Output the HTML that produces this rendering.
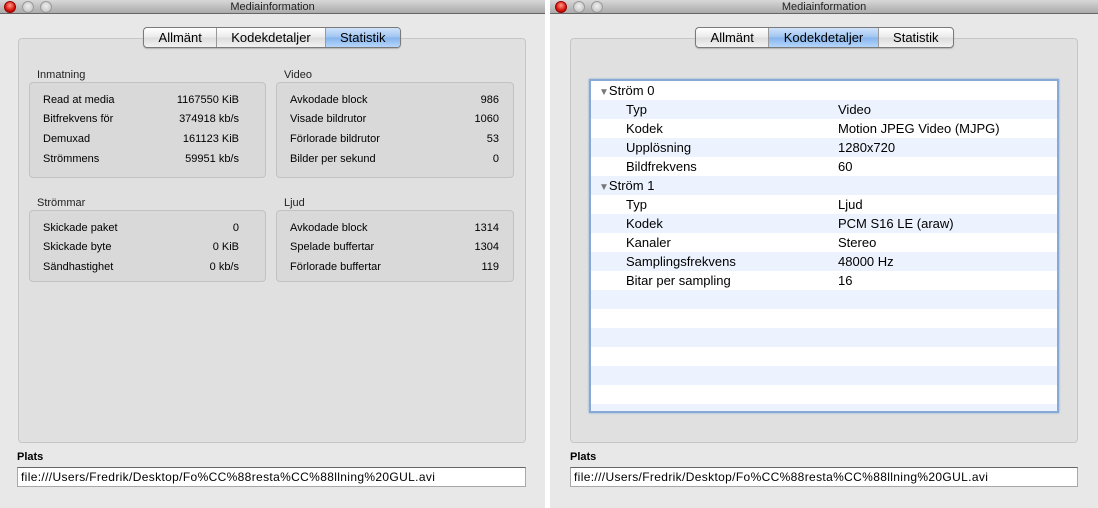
<!DOCTYPE html>
<html><head><meta charset="utf-8"><style>
*{margin:0;padding:0;box-sizing:border-box}
body{width:1098px;height:508px;background:#fff;font-family:"Liberation Sans",sans-serif;font-size:12px;color:#000;position:relative;overflow:hidden}
.win{position:absolute;top:0;height:508px;background:#e8e8e8}
.tb{position:absolute;left:0;right:0;top:0;height:14px;background:linear-gradient(#d8d8d8,#aaa);border-bottom:1px solid #666;text-align:center;font-size:11px;line-height:14px;color:#222}
.dot{position:absolute;top:1px;width:12px;height:12px;border-radius:50%;background:radial-gradient(circle at 50% 40%,#eee,#bbb);border:1px solid #999}
.dot.r{background:radial-gradient(circle at 50% 35%,#ff9a8a,#d8140a 60%,#8a0000);border-color:#900}
.panel{position:absolute;background:#e0e0e0;border:1px solid #c6c6c6;border-radius:4px}
.tabs{position:absolute;top:27px;height:21px;display:flex;border:1px solid #7a7a7a;border-radius:4px;overflow:hidden;background:linear-gradient(#fff,#eaeaea 50%,#dcdcdc 51%,#f2f2f2);box-shadow:0 1px 1px rgba(0,0,0,.2)}
.tabs div{font-size:13px;line-height:19px;text-align:center;border-left:1px solid #999}
.tabs div:first-child{border-left:0}
.tabs .sel{background:linear-gradient(#cfe2fb,#9fc4f0 50%,#86b4ec 51%,#b5d6fb)}
.lbl{position:absolute;font-size:11px;color:#222}
.box{position:absolute;background:#d9d9d9;border:1px solid #c2c2c2;border-radius:4px;width:237px}
.row{position:absolute;left:13px;right:14px;font-size:11px;display:flex;justify-content:space-between;line-height:14px}
.box.l .row{right:26px}
.field{position:absolute;height:20px;background:#fff;border:1px solid #a8a8a8;border-top-color:#666;font-size:12px;line-height:19px;padding-left:3px;letter-spacing:0.35px}
.plats{position:absolute;font-size:11px;font-weight:bold;}
.tbl{position:absolute;left:589px;top:79px;width:470px;height:334px;border:2px solid #86a9d6;background:#fff;overflow:hidden;box-shadow:0 0 2px #86a9d6}
.tr{height:19px;line-height:19px;font-size:13px;position:relative}
.tr:nth-child(even){background:#edf3fe}
.tr .a{position:absolute;left:35px}
.tr .b{position:absolute;left:247px}
.tr .h{position:absolute;left:8px}
</style></head><body>

<div class="win" style="left:0;width:545px">
 <div class="tb">Mediainformation</div>
 <div class="dot r" style="left:4px"></div><div class="dot" style="left:22px"></div><div class="dot" style="left:40px"></div>
 <div class="panel" style="left:18px;top:38px;width:508px;height:405px"></div>
 <div class="tabs" style="left:143px;width:258px"><div style="width:73px">Allmänt</div><div style="width:109px">Kodekdetaljer</div><div class="sel" style="width:76px">Statistik</div></div>
 <div class="lbl" style="left:37px;top:69px">Inmatning</div>
 <div class="lbl" style="left:284px;top:69px">Video</div>
 <div class="box l" style="left:29px;top:82px;height:96px">
  <div class="row" style="top:10px"><span>Read at media</span><span>1167550 KiB</span></div>
  <div class="row" style="top:29px"><span>Bitfrekvens för</span><span>374918 kb/s</span></div>
  <div class="row" style="top:49px"><span>Demuxad</span><span>161123 KiB</span></div>
  <div class="row" style="top:69px"><span>Strömmens</span><span>59951 kb/s</span></div>
 </div>
 <div class="box" style="left:276px;top:82px;height:96px;width:238px">
  <div class="row" style="top:10px"><span>Avkodade block</span><span>986</span></div>
  <div class="row" style="top:29px"><span>Visade bildrutor</span><span>1060</span></div>
  <div class="row" style="top:49px"><span>Förlorade bildrutor</span><span>53</span></div>
  <div class="row" style="top:69px"><span>Bilder per sekund</span><span>0</span></div>
 </div>
 <div class="lbl" style="left:37px;top:197px">Strömmar</div>
 <div class="lbl" style="left:284px;top:197px">Ljud</div>
 <div class="box l" style="left:29px;top:210px;height:72px">
  <div class="row" style="top:10px"><span>Skickade paket</span><span>0</span></div>
  <div class="row" style="top:29px"><span>Skickade byte</span><span>0 KiB</span></div>
  <div class="row" style="top:49px"><span>Sändhastighet</span><span>0 kb/s</span></div>
 </div>
 <div class="box" style="left:276px;top:210px;height:72px;width:238px">
  <div class="row" style="top:10px"><span>Avkodade block</span><span>1314</span></div>
  <div class="row" style="top:29px"><span>Spelade buffertar</span><span>1304</span></div>
  <div class="row" style="top:49px"><span>Förlorade buffertar</span><span>119</span></div>
 </div>
 <div class="plats" style="left:17px;top:451px">Plats</div>
 <div class="field" style="left:17px;top:467px;width:509px">file:///Users/Fredrik/Desktop/Fo%CC%88resta%CC%88llning%20GUL.avi</div>
</div>

<div class="win" style="left:550px;width:548px">
 <div class="tb">Mediainformation</div>
 <div class="dot r" style="left:5px"></div><div class="dot" style="left:23px"></div><div class="dot" style="left:41px"></div>
 <div class="panel" style="left:20px;top:38px;width:508px;height:405px"></div>
 <div class="tabs" style="left:145px;width:259px"><div style="width:73px">Allmänt</div><div class="sel" style="width:110px">Kodekdetaljer</div><div style="width:76px">Statistik</div></div>
 <div class="plats" style="left:20px;top:451px">Plats</div>
 <div class="field" style="left:20px;top:467px;width:508px">file:///Users/Fredrik/Desktop/Fo%CC%88resta%CC%88llning%20GUL.avi</div>
</div>

<div class="tbl">
 <div class="tr"><span class="h"><span style="color:#777;font-size:10px">▼</span>Ström 0</span></div>
 <div class="tr"><span class="a">Typ</span><span class="b">Video</span></div>
 <div class="tr"><span class="a">Kodek</span><span class="b">Motion JPEG Video (MJPG)</span></div>
 <div class="tr"><span class="a">Upplösning</span><span class="b">1280x720</span></div>
 <div class="tr"><span class="a">Bildfrekvens</span><span class="b">60</span></div>
 <div class="tr"><span class="h"><span style="color:#777;font-size:10px">▼</span>Ström 1</span></div>
 <div class="tr"><span class="a">Typ</span><span class="b">Ljud</span></div>
 <div class="tr"><span class="a">Kodek</span><span class="b">PCM S16 LE (araw)</span></div>
 <div class="tr"><span class="a">Kanaler</span><span class="b">Stereo</span></div>
 <div class="tr"><span class="a">Samplingsfrekvens</span><span class="b">48000 Hz</span></div>
 <div class="tr"><span class="a">Bitar per sampling</span><span class="b">16</span></div>
 <div class="tr"></div><div class="tr"></div><div class="tr"></div><div class="tr"></div><div class="tr"></div><div class="tr"></div><div class="tr"></div>
</div>
</body></html>
